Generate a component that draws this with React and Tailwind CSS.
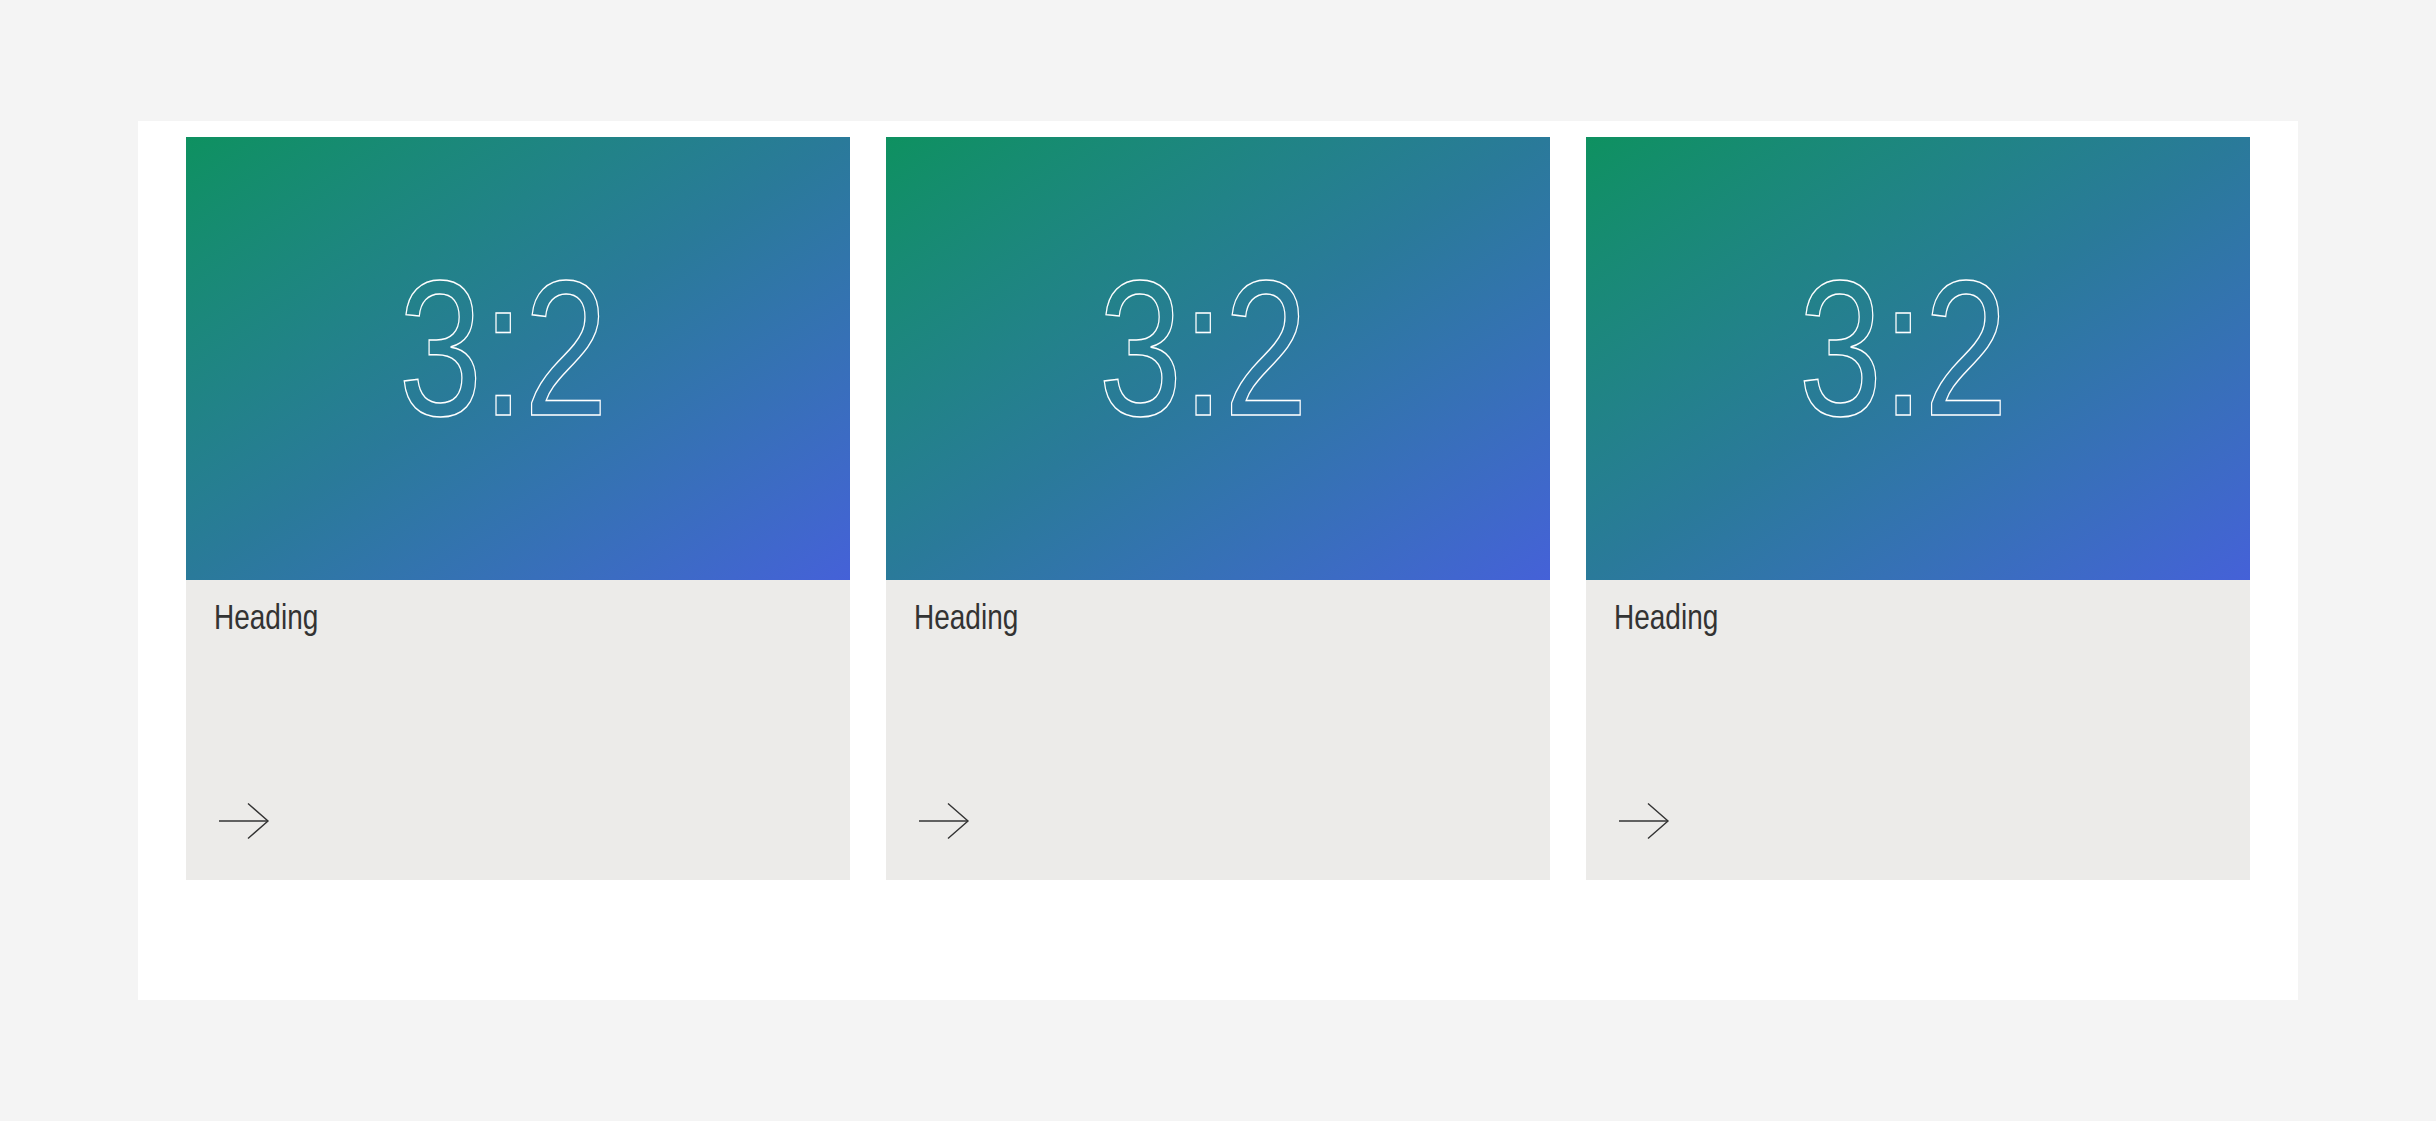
const cards = [
  { id: 1, heading: "Heading" },
  { id: 2, heading: "Heading" },
  { id: 3, heading: "Heading" },
]

function ArrowIcon() {
  return (
    <svg width="52" height="38" viewBox="0 0 52 38" fill="none" stroke="#333333" strokeWidth="1.4">
      <path d="M1 19 H50" />
      <path d="M30 1.5 L50 19 L30 36.5" />
    </svg>
  )
}

function RatioCard({ heading }) {
  return (
    <div className="flex flex-col">
      <div className="aspect-[3/2] w-full bg-gradient-to-br from-[#0e9160] via-[#2a7a9a] to-[#4561d8] flex items-center justify-center pr-[30px] pb-[19px]">
        <span className="inline-block scale-x-[0.78] font-['Liberation_Sans',Arial,sans-serif] text-[193px] leading-none text-transparent [-webkit-text-stroke:1.5px_white] select-none">
          3:2
        </span>
      </div>
      <div className="h-[300px] bg-[#ecebe9] flex flex-col justify-between px-7 pt-[19px] pb-[40px]">
        <h3 className="inline-block origin-left scale-x-[0.8] font-['Liberation_Sans',Arial,sans-serif] text-[35px] leading-none text-[#333333]">
          {heading}
        </h3>
        <div className="ml-1">
          <ArrowIcon />
        </div>
      </div>
    </div>
  )
}

export default function App() {
  return (
    <div className="min-h-screen bg-[#f4f4f4] pt-[121px] px-[138px] pb-[122px]">
      <div className="bg-white px-12 pt-4 pb-[120px] grid grid-cols-3 gap-9">
        {cards.map((card) => (
          <RatioCard key={card.id} heading={card.heading} />
        ))}
      </div>
    </div>
  )
}
